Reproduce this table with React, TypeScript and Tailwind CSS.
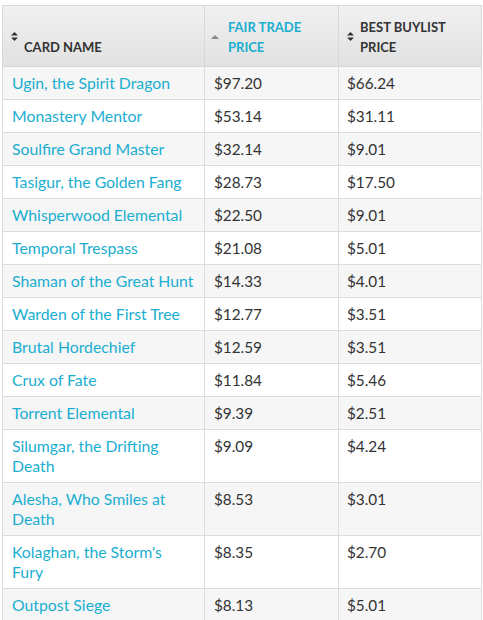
import React from "react";

const rows = [
  { name: "Ugin, the Spirit Dragon", fair: "$97.20", buy: "$66.24" },
  { name: "Monastery Mentor", fair: "$53.14", buy: "$31.11" },
  { name: "Soulfire Grand Master", fair: "$32.14", buy: "$9.01" },
  { name: "Tasigur, the Golden Fang", fair: "$28.73", buy: "$17.50" },
  { name: "Whisperwood Elemental", fair: "$22.50", buy: "$9.01" },
  { name: "Temporal Trespass", fair: "$21.08", buy: "$5.01" },
  { name: "Shaman of the Great Hunt", fair: "$14.33", buy: "$4.01" },
  { name: "Warden of the First Tree", fair: "$12.77", buy: "$3.51" },
  { name: "Brutal Hordechief", fair: "$12.59", buy: "$3.51" },
  { name: "Crux of Fate", fair: "$11.84", buy: "$5.46" },
  { name: "Torrent Elemental", fair: "$9.39", buy: "$2.51" },
  { name: "Silumgar, the Drifting Death", fair: "$9.09", buy: "$4.24" },
  { name: "Alesha, Who Smiles at Death", fair: "$8.53", buy: "$3.01" },
  { name: "Kolaghan, the Storm's Fury", fair: "$8.35", buy: "$2.70" },
  { name: "Outpost Siege", fair: "$8.13", buy: "$5.01" },
];

const SortBoth = () => (
  <svg width="7" height="9" viewBox="0 0 7 9">
    <path d="M3.5 0 L7 3.6 L0 3.6 Z" fill="#333" />
    <path d="M3.5 9 L7 5.4 L0 5.4 Z" fill="#333" />
  </svg>
);

const SortUp = () => (
  <svg width="8" height="4" viewBox="0 0 8 4">
    <path d="M4 0 L8 4 L0 4 Z" fill="#8a8a8a" />
  </svg>
);

const HeadCell = ({
  icon,
  gap,
  color,
  className,
  children,
}: {
  icon: React.ReactNode;
  gap: string;
  color: string;
  className: string;
  children: React.ReactNode;
}) => (
  <th className={`${className} h-[61px] border border-[#d8d8d8] align-middle text-left pr-2 text-[13px] leading-[20px] font-bold uppercase ${color}`}>
    <div className={`flex h-[41px] mt-[1px] ${gap}`}>
      <div className="flex items-center">{icon}</div>
      <div className="self-end">{children}</div>
    </div>
  </th>
);

const App = () => {
  return (
    <div className="bg-white w-[483px] h-[620px] overflow-hidden pt-[5px] pl-[2px] font-['Lato',sans-serif]">
      <table className="table-fixed border-collapse w-[480px]">
        <thead>
          <tr className="bg-linear-to-b from-[#f1f1f1] to-[#e1e1e1]">
            <HeadCell className="w-[202px] pl-[8px]" gap="gap-[6px]" color="text-[#333]" icon={<SortBoth />}>
              Card Name
            </HeadCell>
            <HeadCell className="w-[134px] pl-[6px]" gap="gap-[9px]" color="text-[#1aaed0]" icon={<SortUp />}>
              Fair Trade
              <br />
              Price
            </HeadCell>
            <HeadCell className="pl-[8px]" gap="gap-[6px]" color="text-[#333]" icon={<SortBoth />}>
              Best Buylist
              <br />
              Price
            </HeadCell>
          </tr>
        </thead>
        <tbody>
          {rows.map((r, i) => (
            <tr key={i} className={i % 2 === 0 ? "bg-[#f6f6f6]" : "bg-white"}>
              <td className="border border-[#dcdcdc] align-top pl-[9px] pr-[9px] py-[6px] text-[15.8px] leading-[20px] text-[#1aaed0]">
                {r.name}
              </td>
              <td className="border border-[#dcdcdc] align-top pl-[9px] pr-2 py-[6px] text-[15.3px] leading-[20px] text-[#333]">
                {r.fair}
              </td>
              <td className="border border-[#dcdcdc] align-top pl-[8px] pr-2 py-[6px] text-[15.3px] leading-[20px] text-[#333]">
                {r.buy}
              </td>
            </tr>
          ))}
        </tbody>
      </table>
    </div>
  );
};

export default App;
